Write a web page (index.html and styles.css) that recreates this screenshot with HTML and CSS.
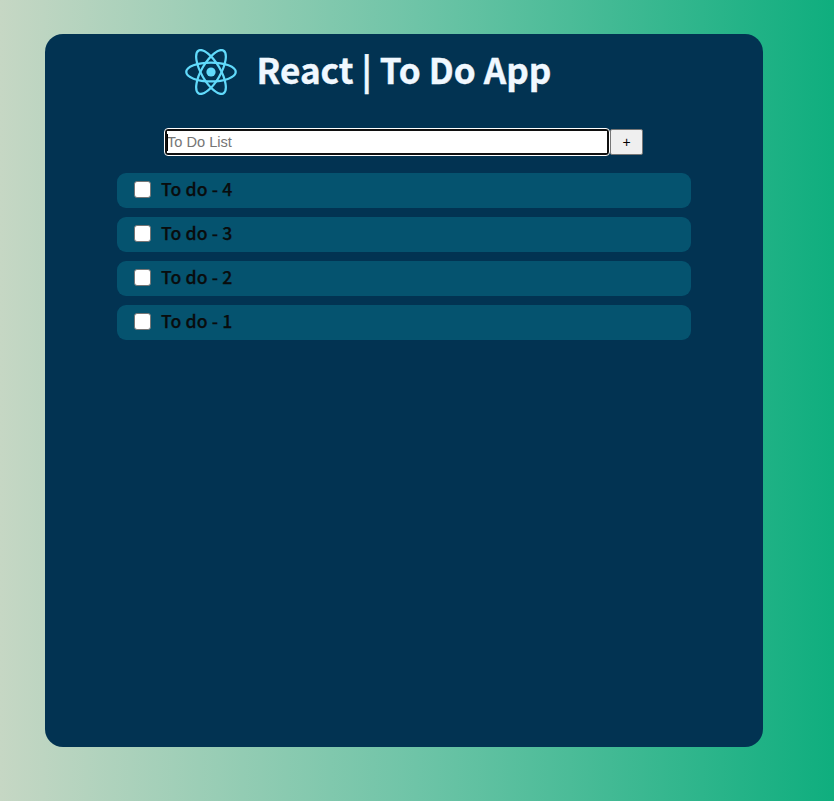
FILE: index.html
```html
<!DOCTYPE html>
<html lang="en">
<head>
<meta charset="utf-8">
<title>React | To Do App</title>
<link rel="stylesheet" href="styles.css">
</head>
<body>
<main class="app">
  <header class="header">
    <svg class="logo" viewBox="-11.5 -10.23 23 20.46" aria-hidden="true">
      <circle r="2.05" fill="#61dafb"/>
      <g fill="none" stroke="#61dafb">
        <ellipse rx="11" ry="4.2"/>
        <ellipse rx="11" ry="4.2" transform="rotate(60)"/>
        <ellipse rx="11" ry="4.2" transform="rotate(120)"/>
      </g>
    </svg>
    <h1 class="title">React | To Do App</h1>
  </header>
  <form class="entry">
    <div class="field"><span class="caret"></span><input class="input" type="text" placeholder="To Do List"></div>
    <button class="add" type="button">+</button>
  </form>
  <ul class="list">
    <li class="item"><input class="check" type="checkbox"><span class="label">To do - 4</span></li>
    <li class="item"><input class="check" type="checkbox"><span class="label">To do - 3</span></li>
    <li class="item"><input class="check" type="checkbox"><span class="label">To do - 2</span></li>
    <li class="item"><input class="check" type="checkbox"><span class="label">To do - 1</span></li>
  </ul>
</main>
</body>
</html>
```
FILE: styles.css
```css
* { box-sizing: border-box; }
body {
  margin: 0;
  height: 801px;
  padding: 34px 71px 54px 45px;
  overflow: hidden;
  background: linear-gradient(90deg, #c6d7c4 0, #6ec4a7 417px, #0fae7e 834px);
  font-family: "Noto Sans CJK JP", sans-serif;
}
.app {
  height: 713px;
  border-radius: 18px;
  background: #023352;
}
.header {
  display: flex;
  align-items: center;
  height: 75px;
  padding-left: 140px;
}
.logo { width: 52px; height: 46px; }
.title {
  margin: 0 0 0 19.5px;
  padding-bottom: 6px;
  color: #f0f8ff;
  font-size: 35.1px;
  font-weight: 700;
  line-height: 69px;
  white-space: nowrap;
  -webkit-text-stroke: 0.4px #f0f8ff;
}
.entry {
  display: flex;
  margin: 19px 0 0 119px;
}
.field {
  position: relative;
  width: 446px;
  height: 28px;
  padding: 2px;
  border: 1px solid #fff;
  border-radius: 4px;
  background: #101010;
}
.input {
  display: block;
  width: 440px;
  height: 22px;
  padding: 0 0 1px;
  border: 0;
  outline: 0;
  background: #fff;
  font: 14.6px "Liberation Sans", sans-serif;
}
.input::placeholder { color: #757575; }
.caret {
  position: absolute;
  top: 5px;
  left: 2px;
  width: 1px;
  height: 17px;
  background: #000;
}
.add {
  width: 33px;
  height: 26px;
  margin: 1px 0 0;
  padding: 0;
  border: 1px solid #767676;
  border-radius: 2px;
  background: #efefef;
  color: #000;
  font: 14px "Liberation Sans", sans-serif;
}
.list {
  display: grid;
  gap: 9px;
  width: 574px;
  margin: 17px 0 0 72px;
  padding: 0;
  list-style: none;
}
.item {
  display: flex;
  align-items: center;
  height: 35px;
  padding-left: 17px;
  border-radius: 9px;
  background: #05536f;
}
.check {
  appearance: none;
  width: 17px;
  height: 17px;
  margin: 0 10px 2px 0;
  border: 1px solid #767676;
  border-radius: 3px;
  background: #fff;
}
.label {
  color: #090c0d;
  font-size: 17.6px;
  font-weight: 500;
  letter-spacing: 0.12px;
  line-height: 31px;
  padding-bottom: 4px;
  -webkit-text-stroke: 0.25px #090c0d;
}
```
